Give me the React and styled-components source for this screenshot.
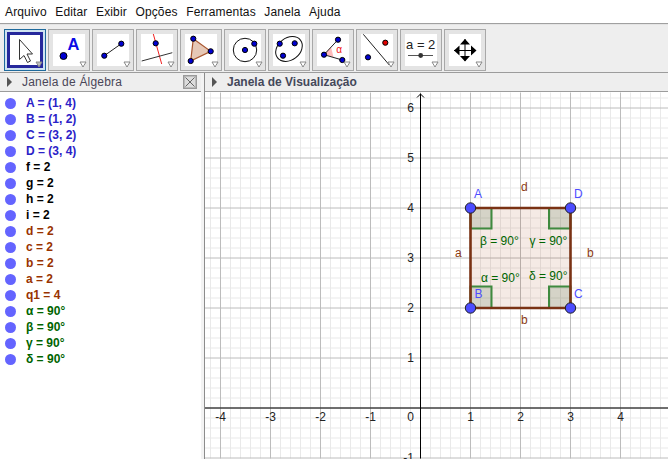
import React from "react";
import styled, { createGlobalStyle } from "styled-components";

const Global = createGlobalStyle`
  html, body { margin: 0; padding: 0; background: #fff; overflow: hidden; }
  body { font-family: "Liberation Sans", Arial, sans-serif; }
  svg { display: block; }
`;
const Page = styled.div`width: 668px; height: 459px; display: flex; flex-direction: column; overflow: hidden; background: #fff;`;
const MenuBar = styled.nav`height: 23px; flex: none; display: flex; align-items: center; padding-left: 5px; gap: 8.5px; font-size: 12px; letter-spacing: .15px; color: #111; border-bottom: 1px solid #a0a0a0; box-sizing: content-box;`;
const MenuItem = styled.span`padding-top: 1px;`;
const Toolbar = styled.div`height: 49px; flex: none; box-sizing: border-box; display: flex; gap: 2px; padding: 4px 0 0 4px; background: #eee; border-top: 1px solid #e4e4e4; border-bottom: 1px solid #9c9c9c;`;
const ToolButton = styled.button`
  position: relative; width: 42px; height: 42px; padding: 0; box-sizing: border-box; flex: none;
  display: flex; align-items: center; justify-content: center;
  background: ${p => (p.$active ? "#cfe3f1" : "#e4e4e4")};
  border: 1px solid ${p => (p.$active ? "#1f6a9c" : "#a8a8a8")};
`;
const ToolFace = styled.div`
  width: ${p => (p.$active ? "30px" : "32px")}; height: ${p => (p.$active ? "30px" : "32px")};
  background: #fff; flex: none;
  border: ${p => (p.$active ? "3px solid #26289c" : "none")};
`;
const Caret = styled.svg`position: absolute; right: 2px; bottom: 2px;`;
const Body = styled.div`flex: 1; min-height: 0; display: flex;`;
const AlgebraPanel = styled.aside`width: 201px; flex: none; display: flex; flex-direction: column;`;
const Gutter = styled.div`width: 3px; flex: none; background: #f3f3f3;`;
const GraphicsPanel = styled.section`flex: 1; min-width: 0; display: flex; flex-direction: column; border-left: 1px solid #8c8c8c;`;
const PanelHeader = styled.header`
  height: 19px; flex: none; box-sizing: border-box; display: flex; align-items: center; background: #eee;
  border-bottom: 1px solid #9c9c9c; padding-left: 7px; position: relative; font-size: 12px; color: #4a4658;
`;
const Arrow = styled.i`width: 0; height: 0; border-left: 5px solid #555; border-top: 5px solid transparent; border-bottom: 5px solid transparent; margin-right: 10px;`;
const Title = styled.span`font-weight: ${p => (p.$bold ? 700 : 400)}; letter-spacing: ${p => (p.$bold ? "0" : ".2px")}; color: ${p => (p.$bold ? "#44485a" : "#4a4658")};`;
const CloseBox = styled.svg`position: absolute; right: 4px; top: 2px;`;
const List = styled.ul`list-style: none; margin: 0; padding: 3px 0 0 5px;`;
const Row = styled.li`height: 16px; display: flex; align-items: center; font-weight: 700; font-size: 12px; color: ${p => p.$color};`;
const Dot = styled.span`width: 11px; height: 11px; border-radius: 50%; background: #6464ff; margin-right: 10px; flex: none;`;
const Canvas = styled.svg`flex: 1; min-height: 0; width: 100%;`;

const P = ({ x, y, r = 2.6, fill = "#0000d0" }) => <circle cx={x} cy={y} r={r} fill={fill} stroke="#000" strokeWidth="1" />;

const icons = [
  <svg key="0" width="30" height="30" viewBox="0 0 30 30"><path d="M9.5 4.5V24.5L14 20.5L17.5 27.5L20.5 26L17 19H22.5Z" fill="#fff" stroke="#333" strokeWidth="1" /></svg>,
  <svg key="1" width="32" height="32"><P x={10.5} y={22} r={3.5} /><text x="14.5" y="16" fontSize="16.5" fontWeight="700" fill="#0a0ae6" fontFamily="Liberation Sans">A</text></svg>,
  <svg key="2" width="32" height="32"><line x1="7.3" y1="21.7" x2="24.3" y2="9.7" stroke="#222" /><P x={7.3} y={21.7} /><P x={24.3} y={9.7} /></svg>,
  <svg key="3" width="32" height="32"><line x1="12.3" y1="0" x2="20.7" y2="30" stroke="#f02020" /><line x1="0.7" y1="27" x2="31.3" y2="18.7" stroke="#333" /><P x={14.7} y={9.3} /></svg>,
  <svg key="4" width="32" height="32"><polygon points="8.3,4.7 25.7,17.3 5.7,27" fill="#e6c8b6" stroke="#a8552e" strokeWidth="1.2" /><P x={8.3} y={4.7} /><P x={25.7} y={17.3} /><P x={5.7} y={27} /></svg>,
  <svg key="5" width="32" height="32"><circle cx="16" cy="16" r="11.7" fill="none" stroke="#111" strokeWidth="1" /><P x={16} y={16} /><P x={25.3} y={9.7} /></svg>,
  <svg key="6" width="32" height="32"><ellipse cx="16" cy="15" rx="14.5" ry="11" transform="rotate(-38 16 15)" fill="none" stroke="#111" /><P x={6.7} y={9.7} /><P x={21.7} y={9.3} /><P x={10} y={21.7} /></svg>,
  <svg key="7" width="32" height="32"><path d="M7 20.7L14 13L16.5 23Z" fill="#ffbcbc" /><line x1="7" y1="20.7" x2="21" y2="5.7" stroke="#222" /><line x1="7" y1="20.7" x2="25.3" y2="26" stroke="#222" /><P x={7} y={20.7} /><P x={21} y={5.7} /><P x={25.3} y={26} /><text x="19.2" y="18.5" fontSize="10" fill="#f01010" fontFamily="Liberation Sans">α</text></svg>,
  <svg key="8" width="32" height="32"><line x1="2.3" y1="0.3" x2="28.3" y2="31" stroke="#222" /><P x={24.3} y={8.7} fill="#e00000" /><P x={7} y={23.3} /></svg>,
  <svg key="9" width="32" height="32"><text x="15.7" y="14.7" fontSize="13" textAnchor="middle" fill="#222" fontFamily="Liberation Sans">a = 2</text><line x1="3" y1="21.5" x2="28" y2="21.5" stroke="#555" /><circle cx="15.7" cy="21.5" r="2.4" fill="#333" /></svg>,
  <svg key="10" width="32" height="32"><path d="M16 5V27M5 16.5H27" stroke="#000" strokeWidth="1" /><path d="M16 5L11 10.5H21ZM16 27.5L11 22H21ZM5 16.5L10.5 11.5V21.5ZM27.5 16.5L22 11.5V21.5Z" fill="#000" /></svg>,
];

const rows = [
  ["A = (1, 4)", "#2b22c8"], ["B = (1, 2)", "#2b22c8"], ["C = (3, 2)", "#2b22c8"], ["D = (3, 4)", "#2b22c8"],
  ["f = 2", "#000"], ["g = 2", "#000"], ["h = 2", "#000"], ["i = 2", "#000"],
  ["d = 2", "#993300"], ["c = 2", "#993300"], ["b = 2", "#993300"], ["a = 2", "#993300"], ["q1 = 4", "#993300"],
  ["α = 90°", "#006400"], ["β = 90°", "#006400"], ["γ = 90°", "#006400"], ["δ = 90°", "#006400"],
];
const menus = ["Arquivo", "Editar", "Exibir", "Opções", "Ferramentas", "Janela", "Ajuda"];

const X0 = 420.5, Y0 = 408.5, U = 50;
const minorX = [], majorX = [], minorY = [], majorY = [];
for (let i = -22; i <= 26; i++) { const x = X0 + i * 10; (i % 5 === 0 ? majorX : minorX).push(x); }
for (let i = -34; i <= 6; i++) { const y = Y0 + i * 10; (i % 5 === 0 ? majorY : minorY).push(y); }

const Sq = ({ d }) => <path d={d} fill="rgba(0,60,0,.13)" stroke="#3f8a3f" strokeWidth="2" />;

export default function App() {
  return (
    <Page>
      <Global />
      <MenuBar>{menus.map(m => <MenuItem key={m}>{m}</MenuItem>)}</MenuBar>
      <Toolbar>
        {icons.map((ic, i) => (
          <ToolButton key={i} $active={i === 0}>
            <ToolFace $active={i === 0}>{ic}</ToolFace>
            <Caret width="8" height="7" viewBox="0 0 8 7"><path d="M1 1H7L4 6Z" fill={i === 0 ? "#bbb" : "#fff"} stroke="#888" /></Caret>
          </ToolButton>
        ))}
      </Toolbar>
      <Body>
        <AlgebraPanel>
          <PanelHeader>
            <Arrow />
            <Title>Janela de Álgebra</Title>
            <CloseBox width="14" height="14" viewBox="0 0 14 14"><rect x=".75" y=".75" width="12.5" height="12.5" fill="#dcdcdc" stroke="#9a9a9a" strokeWidth="1.5" /><path d="M2.5 2.5L11.5 11.5M11.5 2.5L2.5 11.5" stroke="#666" /></CloseBox>
          </PanelHeader>
          <List>
            {rows.map(([t, c]) => <Row key={t} $color={c}><Dot />{t}</Row>)}
          </List>
        </AlgebraPanel>
        <Gutter />
        <GraphicsPanel>
          <PanelHeader>
            <Arrow />
            <Title $bold>Janela de Visualização</Title>
          </PanelHeader>
          <Canvas viewBox="205 93 463 366" fontFamily="Liberation Sans" fontSize="12">
            {minorX.map(x => <line key={x} x1={x} x2={x} y1="93" y2="459" stroke="#e9e9e9" />)}
            {minorY.map(y => <line key={y} y1={y} y2={y} x1="205" x2="668" stroke="#e9e9e9" />)}
            {majorX.map(x => <line key={x} x1={x} x2={x} y1="93" y2="459" stroke="#bcbcbc" />)}
            {majorY.map(y => <line key={y} y1={y} y2={y} x1="205" x2="668" stroke="#bcbcbc" />)}
            <line x1="205" x2="668" y1={Y0} y2={Y0} stroke="#000" />
            <line x1={X0} x2={X0} y1="94" y2="459" stroke="#000" />
            <path d="M417 98L420.5 94.5L424 98" fill="none" stroke="#000" />
            {[-4, -3, -2, -1].map(n => <text key={n} x={X0 + n * U} y="421" textAnchor="middle" fill="#222">{n}</text>)}
            {[1, 2, 3, 4].map(n => <text key={n} x={X0 + n * U} y="421" textAnchor="middle" fill="#222">{n}</text>)}
            <text x="410.5" y="421" textAnchor="middle" fill="#222">0</text>
            {[1, 2, 3, 4, 5, 6].map(n => <text key={n} x="414" y={Y0 - n * U + 4} textAnchor="end" fill="#222">{n}</text>)}
            <text x="414" y="462" textAnchor="end" fill="#222">-1</text>

            <polygon points="470.5,208.5 570.5,208.5 570.5,308.5 470.5,308.5" fill="rgba(153,51,0,.1)" />
            <Sq d="M470.5 229H491.5V208.5H470.5Z" />
            <Sq d="M549 208.5V229H570.5V208.5Z" />
            <Sq d="M470.5 287H491.5V308.5H470.5Z" />
            <Sq d="M570.5 287H549V308.5H570.5Z" />
            <polygon points="470.5,208.5 570.5,208.5 570.5,308.5 470.5,308.5" fill="none" stroke="#7a3214" strokeWidth="2.6" />
            {[[470.5, 208.5], [570.5, 208.5], [470.5, 308.5], [570.5, 308.5]].map(([x, y]) => <circle key={x + "" + y} cx={x} cy={y} r="5.2" fill="#4d4dff" stroke="#222" strokeWidth="1" />)}

            <g fill="#4d4dff">
              <text x="474" y="198">A</text><text x="574" y="198">D</text>
              <text x="474.5" y="298">B</text><text x="574" y="298">C</text>
            </g>
            <g fill="#8a3a14">
              <text x="521" y="191">d</text><text x="455" y="257">a</text>
              <text x="587" y="257">b</text><text x="521" y="324">b</text>
            </g>
            <g fill="#006400">
              <text x="480" y="245">β = 90°</text><text x="529.5" y="245">γ = 90°</text>
              <text x="481" y="282.5">α = 90°</text><text x="529" y="280.5">δ = 90°</text>
            </g>
          </Canvas>
        </GraphicsPanel>
      </Body>
    </Page>
  );
}
